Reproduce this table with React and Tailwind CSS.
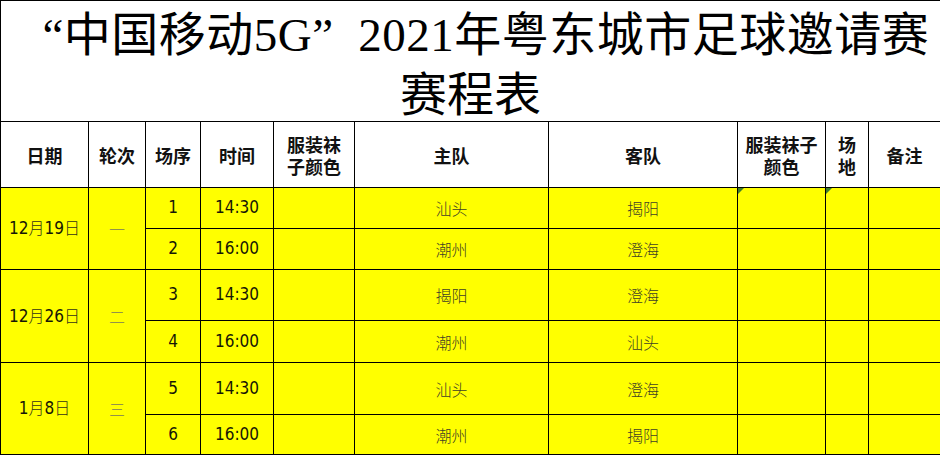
import React from 'react';

const matches = [
  {
    date: ['12', '19'],
    round: '一',
    games: [
      { no: 1, time: '14:30', home: '汕头', away: '揭阳', flag: true },
      { no: 2, time: '16:00', home: '潮州', away: '澄海' },
    ],
  },
  {
    date: ['12', '26'],
    round: '二',
    games: [
      { no: 3, time: '14:30', home: '揭阳', away: '澄海' },
      { no: 4, time: '16:00', home: '潮州', away: '汕头' },
    ],
  },
  {
    date: ['1', '8'],
    round: '三',
    games: [
      { no: 5, time: '14:30', home: '汕头', away: '澄海' },
      { no: 6, time: '16:00', home: '潮州', away: '揭阳' },
    ],
  },
];

const num = "font-['DejaVu_Sans_Condensed','DejaVu_Sans',sans-serif] text-[17px] text-[#161606]";
const cjk = "font-['Noto_Sans_CJK_SC',sans-serif]";

// header cell: every line is its own block so the two-line titles stack cleanly
const Head = ({ lines }) => (
  <div className={`bg-white flex flex-col items-center justify-center text-center text-[18px] leading-[22px] font-bold text-[#111] ${cjk}`}>
    {lines.map((l) => (
      <div key={l} className="whitespace-nowrap">{l}</div>
    ))}
  </div>
);

const Cell = ({ children, className = '', flag }) => (
  <div className={`relative bg-[#ffff00] flex items-center justify-center ${className}`}>
    {flag && (
      <svg className="absolute left-0 top-0" width="6" height="6" viewBox="0 0 6 6">
        <polygon points="0,0 6,0 0,6" fill="#3f7f2a" />
      </svg>
    )}
    {children}
  </div>
);

const headers = [
  ['日期'], ['轮次'], ['场序'], ['时间'], ['服装袜', '子颜色'],
  ['主队'], ['客队'], ['服装袜子', '颜色'], ['场', '地'], ['备注'],
];

const App = () => {
  return (
    <div className="w-[940px] h-[455px] overflow-hidden bg-white">
      <div className={`h-[121px] border-t border-l border-black flex flex-col items-center pt-[2px] text-black text-[47px] leading-[55px] font-['Liberation_Serif','Noto_Sans_CJK_SC',serif]`}>
        <div className="whitespace-nowrap pl-[4px] tracking-[0.5px]">
          <span className="inline-block w-[48px] text-right">“</span>
          <span className={cjk}>中国移动</span>5G
          <span className="inline-block w-[46px] text-left">”</span>
          2021<span className={cjk}>年粤东城市足球邀请赛</span>
        </div>
        <div className={`whitespace-nowrap ${cjk}`}>赛程表</div>
      </div>

      <div className="grid grid-cols-[87px_56px_54px_72px_80px_193px_188px_87px_42px_71px] grid-rows-[65px_40px_40px_50px_41px_51px_39px] gap-px bg-black pt-px pl-px pb-px">
        {headers.map((h) => (
          <Head key={h.join('')} lines={h} />
        ))}

        {matches.map((m) => (
          <React.Fragment key={m.round}>
            <Cell className="row-span-2">
              <span className={num}>
                {m.date[0]}
                <span className={`${cjk} font-light text-[16px] text-[#333318]`}>月</span>
                {m.date[1]}
                <span className={`${cjk} font-light text-[16px] text-[#333318]`}>日</span>
              </span>
            </Cell>
            <Cell className="row-span-2">
              <span className={`${cjk} font-light text-[16px] text-[#7a7a5a]`}>{m.round}</span>
            </Cell>
            {m.games.map((g, gi) => (
              <React.Fragment key={g.no}>
                <Cell className={gi === 0 ? '' : 'col-start-3'}>
                  <span className={num}>{g.no}</span>
                </Cell>
                <Cell>
                  <span className={num}>{g.time}</span>
                </Cell>
                <Cell />
                <Cell>
                  <span className={`${cjk} font-light text-[16px] text-[#3f3f26]`}>{g.home}</span>
                </Cell>
                <Cell>
                  <span className={`${cjk} font-light text-[16px] text-[#3f3f26]`}>{g.away}</span>
                </Cell>
                <Cell flag={g.flag} />
                <Cell flag={g.flag} />
                <Cell />
              </React.Fragment>
            ))}
          </React.Fragment>
        ))}
      </div>
    </div>
  );
};

export default App;
